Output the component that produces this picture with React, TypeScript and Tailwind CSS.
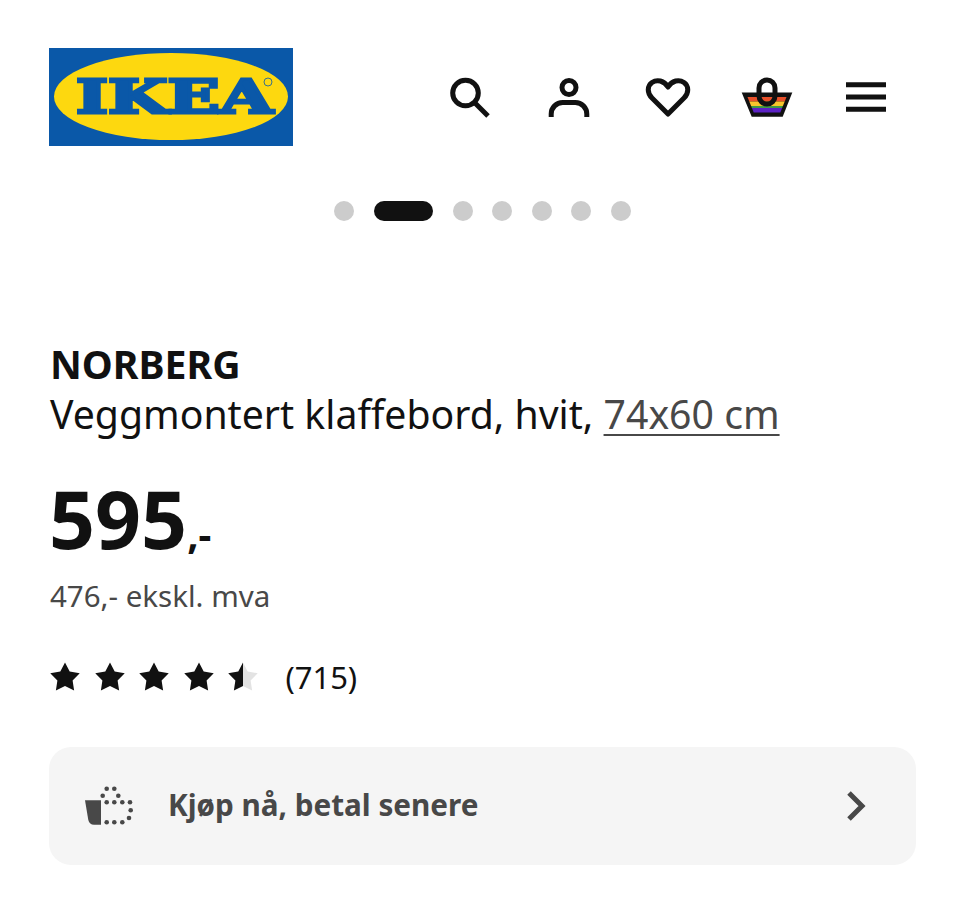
import React from "react";

const STAR = "M16 1.500L20.700 10.530L30.740 12.210L23.610 19.470L25.110 29.540L16 25L6.890 29.540L8.390 19.470L1.260 12.210L11.300 10.530Z";

const Star = ({ half = false }: { half?: boolean }) => (
  <svg width="32" height="32" viewBox="0 0 32 32" className="block">
    <defs>
      <clipPath id="left-half"><rect x="0" y="0" width="16" height="32" /></clipPath>
    </defs>
    <path d={STAR} fill={half ? "#e3e3e3" : "#111111"} />
    {half && <path clipPath="url(#left-half)" d={STAR} fill="#111111" />}
  </svg>
);

const Logo = () => (
  <svg width="244" height="98" viewBox="0 0 244 98" className="block shrink-0">
    <rect width="244" height="98" fill="#0a58a8" />
    <ellipse cx="122" cy="48.500" rx="117" ry="43.500" fill="#fdd80f" />
    <text
      x="27"
      y="65"
      textLength="197"
      lengthAdjust="spacingAndGlyphs"
      fontFamily="'DejaVu Serif', serif"
      fontWeight="700"
      fontSize="46"
      fill="#0a58a8"
      stroke="#0a58a8"
      strokeWidth="3"
    >
      IKEA
    </text>
    <circle cx="219" cy="34" r="4" fill="none" stroke="#0a58a8" strokeWidth="0.8" />
  </svg>
);

const IconBox = ({ children }: { children: React.ReactNode }) => (
  <svg width="48" height="48" viewBox="0 0 48 48" fill="none" className="block overflow-visible">
    {children}
  </svg>
);

const Dot = () => <div className="h-5 w-5 rounded-full bg-[#cccccc]" />;

export default function App() {
  return (
    <div className="h-[897px] w-[960px] overflow-hidden bg-white font-['Noto_Sans',sans-serif] text-[#111111]">
      <header className="flex items-start pl-[49px] pt-12">
        <Logo />
        <nav className="ml-[153px] mt-[25px] flex gap-[51px]">
          <IconBox>
            <circle cx="19.500" cy="20" r="12.800" stroke="#111" strokeWidth="5" />
            <path d="M28.500 29.500L42 43" stroke="#111" strokeWidth="5" />
          </IconBox>
          <IconBox>
            <circle cx="24" cy="14.500" r="7" stroke="#111" strokeWidth="5" />
            <path d="M6.200 44v-3a11.500 11.500 0 0 1 11.500-11.500h12.600a11.500 11.500 0 0 1 11.500 11.500v3" stroke="#111" strokeWidth="5" />
          </IconBox>
          <IconBox>
            <path
              d="M24 41L8 25C3 20 3 13 8 9.500C13 6 20 7.500 24 14C28 7.500 35 6 40 9.500C45 13 45 20 40 25Z"
              stroke="#111"
              strokeWidth="5"
              strokeLinejoin="round"
            />
          </IconBox>
          <IconBox>
            <path d="M-1.300 19.400H49.300L39.700 43.700H8.700Z" fill="#111" />
            <path d="M4.500 24H43.500L41.700 28.500H6.300Z" fill="#e8502a" />
            <path d="M6.300 28.500H41.700L39.900 33H8.100Z" fill="#f7c52c" />
            <path d="M8.100 33H39.900L39.100 35H8.900Z" fill="#3f9a45" />
            <path d="M8.900 35H39.100L37.300 39.500H10.700Z" fill="#5b21c4" />
            <rect x="16" y="7" width="16" height="24" rx="8" stroke="#111" strokeWidth="5" />
          </IconBox>
          <IconBox>
            <path d="M4 11.700h40M4 24h40M4 36.300h40" stroke="#111" strokeWidth="5" />
          </IconBox>
        </nav>
      </header>

      <div className="ml-[334px] mt-[55px] flex gap-[19.500px]">
        <Dot />
        <div className="h-5 w-[59.500px] rounded-full bg-[#111111]" />
        <Dot />
        <Dot />
        <Dot />
        <Dot />
        <Dot />
      </div>

      <main className="px-[49px] pt-[118px]">
        <h1 className="ml-px text-[39.200px] font-bold leading-[50px]">NORBERG</h1>
        <p className="ml-px text-[39.200px] leading-[50px]">
          Veggmontert klaffebord, hvit,{" "}
          <span className="text-[#484848] underline decoration-2 underline-offset-[5px]">74x60 cm</span>
        </p>
        <div className="mt-[29px] flex items-baseline leading-[100px]">
          <span className="text-[80.500px] font-bold">595</span>
          <span className="text-[40px] font-bold">,-</span>
        </div>
        <p className="ml-px mt-[-8px] text-[29.500px] leading-[40px] text-[#484848]">476,- ekskl. mva</p>
        <div className="mt-[39px] flex items-center">
          <div className="flex gap-[12.600px]">
            <Star />
            <Star />
            <Star />
            <Star />
            <Star half />
          </div>
          <span className="ml-[26px] text-[31px] leading-[44px]">(715)</span>
        </div>
        <div className="mt-[48px] flex h-[118px] w-[867px] items-center rounded-[22px] bg-[#f5f5f5] pl-[36px] pr-[48px]">
          <svg width="48" height="40" viewBox="0 0 48 40" className="shrink-0">
            <path d="M0 14.300H16V38.700H9C6 38.700 4 37 3.300 34Z" fill="#484848" />
            <g fill="#484848">
              <circle cx="21.700" cy="2.700" r="2.300" /><circle cx="29.300" cy="2.700" r="2.300" />
              <circle cx="17.700" cy="9.700" r="2.300" /><circle cx="33.300" cy="9.700" r="2.300" />
              <circle cx="21.700" cy="16.300" r="2.300" /><circle cx="29.300" cy="16.300" r="2.300" />
              <circle cx="37.300" cy="16.300" r="2.300" /><circle cx="45" cy="16.300" r="2.300" />
              <circle cx="45.700" cy="24.300" r="2.300" /><circle cx="44" cy="32" r="2.300" />
              <circle cx="21.700" cy="36.300" r="2.300" /><circle cx="29.300" cy="36.300" r="2.300" />
              <circle cx="37.300" cy="36.300" r="2.300" />
            </g>
          </svg>
          <span className="ml-[35px] flex-1 text-[29.700px] font-bold leading-[40px] text-[#484848] mb-[2px]">Kjøp nå, betal senere</span>
          <svg width="24" height="32" viewBox="0 0 24 32" fill="none" className="shrink-0">
            <path d="M5 3l13 13L5 29" stroke="#484848" strokeWidth="5" />
          </svg>
        </div>
      </main>
    </div>
  );
}
